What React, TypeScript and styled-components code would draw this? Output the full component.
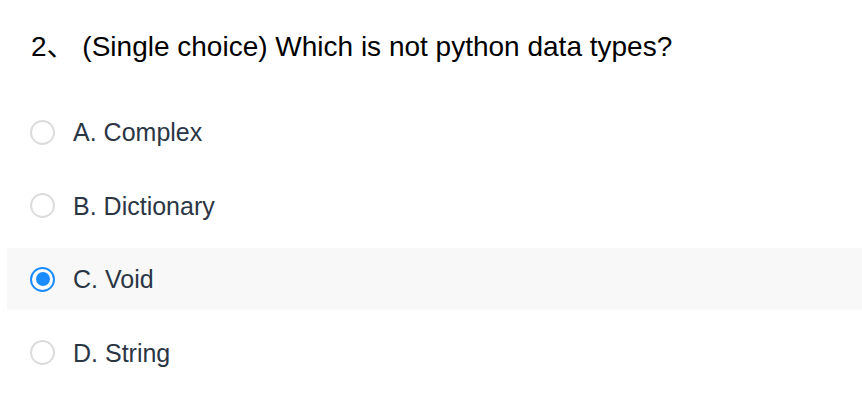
import React, { useState } from 'react';
import styled, { createGlobalStyle } from 'styled-components';

const GlobalStyle = createGlobalStyle`
  html, body {
    margin: 0;
    padding: 0;
    background: #ffffff;
  }
  body {
    font-family: "Liberation Sans", Arial, "Noto Sans CJK SC", sans-serif;
  }
`;

const ScQuestion = styled.div`
  width: 862px;
  height: 409px;
  padding: 31px 0 0 7px;
  box-sizing: border-box;
`;

const ScTitle = styled.h2`
  margin: 0 0 38px 24px;
  font-size: 28px;
  line-height: 32px;
  font-weight: normal;
  color: #000000;
  white-space: pre;
`;

const ScOptions = styled.div`
  display: flex;
  flex-direction: column;
  gap: 11.5px;
`;

const ScOption = styled.label<{ $checked: boolean }>`
  display: flex;
  align-items: center;
  gap: 18px;
  height: 62px;
  padding-left: 23px;
  background: ${p => (p.$checked ? '#f8f8f8' : 'transparent')};
  cursor: pointer;
`;

const ScRadio = styled.span<{ $checked: boolean }>`
  position: relative;
  width: 25px;
  height: 25px;
  box-sizing: border-box;
  border-radius: 50%;
  border: 2px solid ${p => (p.$checked ? '#1a8cff' : '#dcdcdc')};
  background: #ffffff;
  flex: none;

  &::after {
    content: '';
    position: absolute;
    left: 50%;
    top: 50%;
    width: 14px;
    height: 14px;
    margin: -7px 0 0 -7px;
    border-radius: 50%;
    background: #1a8cff;
    display: ${p => (p.$checked ? 'block' : 'none')};
  }
`;

const ScOptionText = styled.span`
  font-size: 25px;
  line-height: 30px;
  color: #2b3645;
`;

const OPTIONS = [
  { key: 'A', text: 'Complex' },
  { key: 'B', text: 'Dictionary' },
  { key: 'C', text: 'Void' },
  { key: 'D', text: 'String' }
];

export default function App(): JSX.Element {
  const [value, setValue] = useState('C');

  return <>
    <GlobalStyle />
    <ScQuestion>
      <ScTitle>{'2、 (Single choice) Which is not python data types?'}</ScTitle>
      <ScOptions>
        {OPTIONS.map(o => (
          <ScOption key={o.key} $checked={value === o.key} onClick={() => setValue(o.key)}>
            <ScRadio $checked={value === o.key} />
            <ScOptionText>{o.key}. {o.text}</ScOptionText>
          </ScOption>
        ))}
      </ScOptions>
    </ScQuestion>
  </>;
}
